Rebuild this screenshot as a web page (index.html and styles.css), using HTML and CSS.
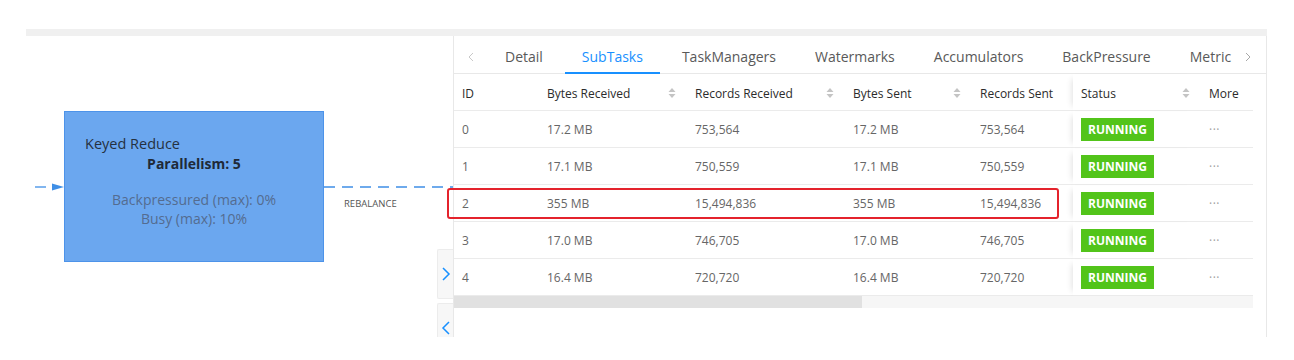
FILE: index.html
```html
<html><head>
<meta charset="UTF-8">
<meta name="viewport" content="width=device-width, initial-scale=1.0">
<title>Job Graph - SubTasks</title>
<link rel="stylesheet" href="styles.css">
</head>
<body>
  <div class="page">
    <div class="band"></div>
    <div class="main">

      <div class="graph">
        <svg class="edges" width="427" height="301" viewBox="0 0 427 301">
          <line x1="9" y1="151" x2="20" y2="151" stroke="#3f8fe6" stroke-width="1.3"/>
          <polygon points="26,147.5 38,151 26,154.5" fill="#3f8fe6"/>
          <line x1="298" y1="151" x2="427" y2="151" stroke="#3f8fe6" stroke-width="1.3" stroke-dasharray="11 7"/>
        </svg>

        <div class="node">
          <h4 class="node-title">Keyed Reduce</h4>
          <div class="node-parallelism">Parallelism: 5</div>
          <div class="node-metrics">
            <div>Backpressured (max): 0%</div>
            <div>Busy (max): 10%</div>
          </div>
        </div>
        <span class="edge-label">REBALANCE</span>

        <button class="toggle toggle-expand">
          <svg width="10" height="14" viewBox="0 0 10 14"><polyline points="2,1 8,7 2,13" fill="none" stroke="#1890ff" stroke-width="1.5"/></svg>
        </button>
        <button class="toggle toggle-collapse">
          <svg width="10" height="14" viewBox="0 0 10 14"><polyline points="8,1 2,7 8,13" fill="none" stroke="#1890ff" stroke-width="1.5"/></svg>
        </button>
      </div>

      <div class="panel">
        <div class="tabs">
          <div class="tab-nav">
            <svg width="6" height="10" viewBox="0 0 6 10"><polyline points="5,1 1,5 5,9" fill="none" stroke="#c8c8c8" stroke-width="1"/></svg>
          </div>
          <div class="tab-list">
            <div class="tab">Detail</div>
            <div class="tab tab-active">SubTasks</div>
            <div class="tab">TaskManagers</div>
            <div class="tab">Watermarks</div>
            <div class="tab">Accumulators</div>
            <div class="tab">BackPressure</div>
            <div class="tab">Metric</div>
          </div>
          <div class="tab-nav tab-next">
            <svg width="6" height="10" viewBox="0 0 6 10"><polyline points="1,1 5,5 1,9" fill="none" stroke="#a8a8a8" stroke-width="1"/></svg>
          </div>
        </div>

        <div class="table-wrap">
          <table class="subtasks">
            <colgroup>
              <col style="width:85px"><col style="width:148px"><col style="width:158px"><col style="width:127px">
              <col style="width:101px"><col style="width:128px"><col style="width:52px">
            </colgroup>
            <thead>
              <tr>
                <th>ID</th>
                <th class="sortable"><div class="th-inner">Bytes Received <span class="sorter"></span></div></th>
                <th class="sortable"><div class="th-inner">Records Received <span class="sorter"></span></div></th>
                <th class="sortable"><div class="th-inner">Bytes Sent <span class="sorter"></span></div></th>
                <th>Records Sent</th>
                <th class="sortable fixed-start"><div class="th-inner">Status <span class="sorter"></span></div></th>
                <th>More</th>
              </tr>
            </thead>
            <tbody id="rows"></tbody>
          </table>
          <div class="scrollbar"><div class="scroll-thumb"></div></div>
        </div>

        <div class="highlight"></div>
      </div>

    </div>
  </div>

  <script>
    // subtask metrics
    const subtasks = [
      { id: 0, bytesIn: "17.2 MB", recordsIn: "753,564", bytesOut: "17.2 MB", recordsOut: "753,564" },
      { id: 1, bytesIn: "17.1 MB", recordsIn: "750,559", bytesOut: "17.1 MB", recordsOut: "750,559" },
      { id: 2, bytesIn: "355 MB", recordsIn: "15,494,836", bytesOut: "355 MB", recordsOut: "15,494,836" },
      { id: 3, bytesIn: "17.0 MB", recordsIn: "746,705", bytesOut: "17.0 MB", recordsOut: "746,705" },
      { id: 4, bytesIn: "16.4 MB", recordsIn: "720,720", bytesOut: "16.4 MB", recordsOut: "720,720" }
    ];

    const sortIcon = '<svg width="8" height="12" viewBox="0 0 8 12">' +
      '<polygon points="4,1 7.5,5 0.5,5" fill="#c4c4c4"/>' +
      '<polygon points="0.5,7 7.5,7 4,11" fill="#c4c4c4"/></svg>';
    document.querySelectorAll('.sorter').forEach(el => { el.innerHTML = sortIcon; });

    const tbody = document.getElementById('rows');
    subtasks.forEach(task => {
      const row = document.createElement('tr');
      row.innerHTML = `
        <td>${task.id}</td>
        <td>${task.bytesIn}</td>
        <td>${task.recordsIn}</td>
        <td>${task.bytesOut}</td>
        <td>${task.recordsOut}</td>
        <td class="fixed-start"><span class="badge">RUNNING</span></td>
        <td class="more">···</td>
      `;
      tbody.appendChild(row);
    });
  </script>
</body>
</html>
```

FILE: styles.css
```css
body {
  margin: 0;
  background-color: #ffffff;
  font-family: "Open Sans", "Noto Sans", sans-serif;
  color: #595959;
}
.page {
  padding: 29px 27px 0 26px;
}
.band {
  height: 7px;
  background-color: #f0f0f0;
}
.main {
  display: flex;
  height: 301px;
}

/* job graph canvas */
.graph {
  position: relative;
  flex: none;
  width: 427px;
  overflow: hidden;
}
.edges {
  position: absolute;
  left: 0;
  top: 0;
}
.node {
  position: absolute;
  left: 38px;
  top: 75px;
  width: 260px;
  height: 151px;
  box-sizing: border-box;
  padding-top: 22px;
  background-color: #6ba7ef;
  border: 1px solid #4d93e9;
  text-align: center;
}
.node-title {
  margin: 0;
  padding-left: 20px;
  text-align: left;
  font-size: 14.5px;
  font-weight: 500;
  line-height: 20px;
  color: #25313f;
}
.node-parallelism {
  font-size: 14px;
  font-weight: bold;
  line-height: 20px;
  color: #1f2a38;
}
.node-metrics {
  margin-top: 16px;
  font-size: 14px;
  line-height: 19px;
  color: #546c90;
}
.edge-label {
  position: absolute;
  left: 318px;
  top: 161px;
  font-size: 9.5px;
  line-height: 14px;
  color: #555555;
}
.toggle {
  position: absolute;
  left: 411px;
  width: 16px;
  height: 50px;
  padding: 0;
  display: flex;
  align-items: center;
  justify-content: center;
  background-color: #f7f7f7;
  border: 1px solid #ececec;
  border-right: none;
  border-radius: 2px 0 0 2px;
}
.toggle-expand {
  top: 213px;
}
.toggle-collapse {
  top: 267px;
}

/* detail panel */
.panel {
  position: relative;
  flex: 1;
  min-width: 0;
  border-left: 1px solid #e8e8e8;
  border-right: 1px solid #e8e8e8;
}
.tabs {
  display: flex;
  height: 38px;
  box-shadow: inset 0 -1px 0 #e8e8e8;
}
.tab-nav {
  flex: none;
  width: 34px;
  display: flex;
  align-items: center;
  justify-content: center;
  padding-top: 4px;
  box-sizing: border-box;
}
.tab-next {
  width: 28px;
  justify-content: flex-start;
  padding-left: 7px;
}
.tab-list {
  flex: 1;
  min-width: 0;
  display: flex;
  gap: 5px;
  overflow: hidden;
}
.tab {
  height: 38px;
  box-sizing: border-box;
  padding: 10px 17px 0;
  font-size: 14px;
  line-height: 21px;
  white-space: nowrap;
  color: #595959;
}
.tab-active {
  color: #1890ff;
  border-bottom: 2px solid #1890ff;
}
.table-wrap {
  margin-right: 13px;
}
.subtasks {
  width: 799px;
  table-layout: fixed;
  border-collapse: separate;
  border-spacing: 0;
  font-size: 12px;
}
.subtasks th, .subtasks td {
  height: 37px;
  box-sizing: border-box;
  padding: 1px 8px 0;
  border-bottom: 1px solid #ebebeb;
  text-align: left;
  white-space: nowrap;
}
.subtasks th {
  font-weight: 500;
  color: #2b2b2b;
  padding-top: 2px;
}
.subtasks td {
  color: #666666;
}
.subtasks th.sortable {
  padding-right: 11px;
}
.th-inner {
  display: flex;
  align-items: center;
  justify-content: space-between;
}
.sorter {
  display: flex;
}
.fixed-start {
  box-shadow: -6px 0 6px -5px rgba(0,0,0,0.12);
}
.badge {
  display: inline-block;
  padding: 0 7px;
  background-color: #52c41a;
  color: #ffffff;
  font-weight: bold;
  line-height: 23px;
}
.subtasks td.more {
  color: #a0a0a0;
  letter-spacing: 0.5px;
}
.scrollbar {
  height: 12px;
  background-color: #f6f6f6;
}
.scroll-thumb {
  width: 408px;
  height: 100%;
  background-color: #e1e1e1;
}
.highlight {
  position: absolute;
  left: -7px;
  top: 152px;
  width: 612px;
  height: 31px;
  box-sizing: border-box;
  border: 2px solid #e4232c;
  border-radius: 3px;
}
```
